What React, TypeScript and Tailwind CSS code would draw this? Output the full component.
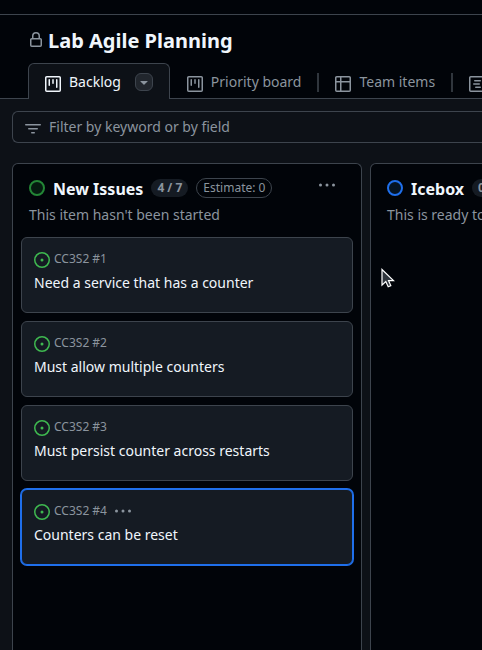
import type { ReactNode } from "react";

type IconProps = { d: string; className?: string };

function Icon({ d, className = "" }: IconProps) {
  return (
    <svg viewBox="0 0 16 16" aria-hidden="true" className={`size-4 shrink-0 fill-current ${className}`}>
      <path d={d} />
    </svg>
  );
}

const frame =
  "M1.75 0h12.5C15.216 0 16 .784 16 1.75v12.5A1.75 1.75 0 0 1 14.25 16H1.75A1.75 1.75 0 0 1 0 14.25V1.75C0 .784.784 0 1.75 0ZM1.5 1.75v12.5c0 .138.112.25.25.25h12.5a.25.25 0 0 0 .25-.25V1.75a.25.25 0 0 0-.25-.25H1.75a.25.25 0 0 0-.25.25Z";

const icons = {
  lock: "M4 4a4 4 0 0 1 8 0v2h.25c.966 0 1.75.784 1.75 1.75v5.5A1.75 1.75 0 0 1 12.25 15h-8.5A1.75 1.75 0 0 1 2 13.25v-5.5C2 6.784 2.784 6 3.75 6H4Zm8.25 3.5h-8.5a.25.25 0 0 0-.25.25v5.5c0 .138.112.25.25.25h8.5a.25.25 0 0 0 .25-.25v-5.5a.25.25 0 0 0-.25-.25ZM10.5 6V4a2.5 2.5 0 1 0-5 0v2Z",
  board:
    frame +
    "M11.75 3a.75.75 0 0 1 .75.75v7.5a.75.75 0 0 1-1.5 0v-7.5a.75.75 0 0 1 .75-.75Zm-8.25.75a.75.75 0 0 1 1.5 0v5.5a.75.75 0 0 1-1.5 0ZM8 3a.75.75 0 0 1 .75.75v3.5a.75.75 0 0 1-1.5 0v-3.5A.75.75 0 0 1 8 3Z",
  table:
    "M0 1.75C0 .784.784 0 1.75 0h12.5C15.216 0 16 .784 16 1.75v12.5A1.75 1.75 0 0 1 14.25 16H1.75A1.75 1.75 0 0 1 0 14.25ZM6.5 6.5v8h7.75a.25.25 0 0 0 .25-.25V6.5Zm8-1.5V1.75a.25.25 0 0 0-.25-.25H6.5V5Zm-13 1.5v7.75c0 .138.112.25.25.25H5v-8ZM5 5V1.5H1.75a.25.25 0 0 0-.25.25V5Z",
  roadmap:
    frame +
    "M5.75 4h5.5a.75.75 0 0 1 0 1.5h-5.5a.75.75 0 0 1 0-1.5Zm-1 3.25h5.5a.75.75 0 0 1 0 1.5h-5.5a.75.75 0 0 1 0-1.5Zm2 3.25h4.5a.75.75 0 0 1 0 1.5h-4.5a.75.75 0 0 1 0-1.5Z",
  filter:
    "M.75 3h14.5a.75.75 0 0 1 0 1.5H.75a.75.75 0 0 1 0-1.5ZM3 7.75A.75.75 0 0 1 3.75 7h8.5a.75.75 0 0 1 0 1.5h-8.5A.75.75 0 0 1 3 7.75Zm3 4a.75.75 0 0 1 .75-.75h2.5a.75.75 0 0 1 0 1.5h-2.5a.75.75 0 0 1-.75-.75Z",
  issue:
    "M8 9.5a1.5 1.5 0 1 0 0-3 1.5 1.5 0 0 0 0 3ZM8 0a8 8 0 1 1 0 16A8 8 0 0 1 8 0ZM1.5 8a6.5 6.5 0 1 0 13 0 6.5 6.5 0 0 0-13 0Z",
  kebab:
    "M0 8a1.5 1.5 0 1 1 3 0 1.5 1.5 0 0 1-3 0Zm6.5 0a1.5 1.5 0 1 1 3 0 1.5 1.5 0 0 1-3 0Zm6.5 0a1.5 1.5 0 1 1 3 0 1.5 1.5 0 0 1-3 0Z",
  triangle:
    "m4.427 7.427 3.396 3.396a.25.25 0 0 0 .354 0l3.396-3.396A.25.25 0 0 0 11.396 7H4.604a.25.25 0 0 0-.177.427Z",
};

function Tab({ icon, children }: { icon: string; children: ReactNode }) {
  return (
    <a href="#" className="flex h-[35px] shrink-0 items-center gap-2 px-4 pt-0.5 text-[#8b949e]">
      <Icon d={icon} className="mt-1" />
      <span>{children}</span>
    </a>
  );
}

function Divider() {
  return <span className="mt-2.5 h-[19px] w-0.5 shrink-0 bg-[#30363d]" />;
}

function Card({ id, title, selected = false }: { id: string; title: string; selected?: boolean }) {
  return (
    <article
      className={`h-[76px] rounded-md border bg-[#151b23] px-3 pt-[11px] ${
        selected ? "border-[#1f6feb] ring-1 ring-[#1f6feb]" : "border-[#3d444d]"
      }`}
    >
      <div className="flex h-5 items-center gap-1 text-xs text-[#8b949e]">
        <Icon d={icons.issue} className="mt-0.5 text-[#3fb950]" />
        <span>{id}</span>
        {selected && (
          <button type="button" aria-label="Card actions" className="ml-1">
            <Icon d={icons.kebab} />
          </button>
        )}
      </div>
      <h3 className="mt-1 text-sm leading-5 text-[#f0f6fc]">{title}</h3>
    </article>
  );
}

type ColumnProps = {
  name: string;
  count: string;
  description: string;
  dot: string;
  children?: ReactNode;
};

function Column({ name, count, description, dot, children }: ColumnProps) {
  return (
    <section className="w-[350px] shrink-0 rounded-t-md border border-b-0 border-[#3d444d] bg-[#010409] px-2">
      <header className="px-2 pt-3">
        <div className="flex h-6 items-center gap-2">
          <span className={`size-4 shrink-0 rounded-full border-2 ${dot}`} />
          <h2 className="pt-0.5 text-base font-bold text-[#f0f6fc]">{name}</h2>
          <span className="rounded-full bg-[#151b23] px-1.5 text-xs leading-[18px] font-bold whitespace-nowrap text-[#8b949e]">
            {count}
          </span>
          <span className="rounded-full border border-[#3d444d] px-1.5 text-xs leading-[18px] whitespace-nowrap text-[#8b949e]">
            Estimate: 0
          </span>
          <button type="button" aria-label={`Actions for ${name}`} className="mr-2.5 mb-1.5 ml-auto text-[#8b949e]">
            <Icon d={icons.kebab} />
          </button>
        </div>
        <p className="mt-[5px] text-sm leading-5 text-[#8b949e]">{description}</p>
      </header>
      <div className="mt-3 flex flex-col gap-2">{children}</div>
    </section>
  );
}

export default function App() {
  return (
    <div className="relative flex min-h-screen flex-col overflow-hidden bg-[#0d1117] font-['Noto_Sans',sans-serif] text-sm">
      <div className="bg-[#010409]">
        <div className="h-[15px] border-b border-[#3d444d]" />
        <div className="flex items-center gap-1 px-7 pt-3">
          <Icon d={icons.lock} className="mb-0.5 text-[#8b949e]" />
          <h1 className="text-xl leading-7 font-bold text-[#f0f6fc]">Lab Agile Planning</h1>
        </div>
        <nav aria-label="Views" className="mt-2 flex border-b border-[#3d444d] pl-7">
          <div className="mr-px -mb-px flex h-9 shrink-0 items-center gap-3.5 rounded-t-md border border-b-0 border-[#3d444d] bg-[#0d1117] px-4">
            <a href="#" aria-current="page" className="flex items-center gap-2 text-[#f0f6fc]">
              <Icon d={icons.board} className="mt-1" />
              <span>Backlog</span>
            </a>
            <button
              type="button"
              aria-label="View options"
              className="flex size-[18px] items-center justify-center rounded-md border border-[#3d444d] bg-[#21262d] text-[#8b949e]"
            >
              <Icon d={icons.triangle} />
            </button>
          </div>
          <Tab icon={icons.board}>Priority board</Tab>
          <Divider />
          <Tab icon={icons.table}>Team items</Tab>
          <Divider />
          <Tab icon={icons.roadmap}>Roadmap</Tab>
        </nav>
      </div>

      <div className="pt-3 pl-3">
        <label className="flex h-8 items-center gap-2 rounded-l-md border border-r-0 border-[#3d444d] px-3 text-[#8b949e]">
          <Icon d={icons.filter} className="mt-1" />
          <input
            type="text"
            aria-label="Filter"
            placeholder="Filter by keyword or by field"
            className="min-w-0 flex-1 bg-transparent outline-none placeholder:text-[#8b949e]"
          />
        </label>
      </div>

      <main className="mt-5 flex flex-1 gap-2 pl-3">
        <Column
          name="New Issues"
          count="4 / 7"
          description="This item hasn't been started"
          dot="border-[#238636] bg-[#051b10]"
        >
          <Card id="CC3S2 #1" title="Need a service that has a counter" />
          <Card id="CC3S2 #2" title="Must allow multiple counters" />
          <Card id="CC3S2 #3" title="Must persist counter across restarts" />
          <Card id="CC3S2 #4" title="Counters can be reset" selected />
        </Column>
        <Column
          name="Icebox"
          count="0"
          description="This is ready to be picked up"
          dot="border-[#1f6feb] bg-[#051424]"
        />
      </main>

      {/* Mouse pointer resting over the board */}
      <svg viewBox="0 0 14 20" aria-hidden="true" className="pointer-events-none absolute top-[268px] left-[381px] h-5 w-3.5">
        <path
          d="M1 1.5v15.6l3.8-3.5 2.4 5.2 2.6-1.2-2.3-5h5z"
          fill="#30363d"
          stroke="#fff"
          strokeWidth="1.2"
        />
      </svg>
    </div>
  );
}
